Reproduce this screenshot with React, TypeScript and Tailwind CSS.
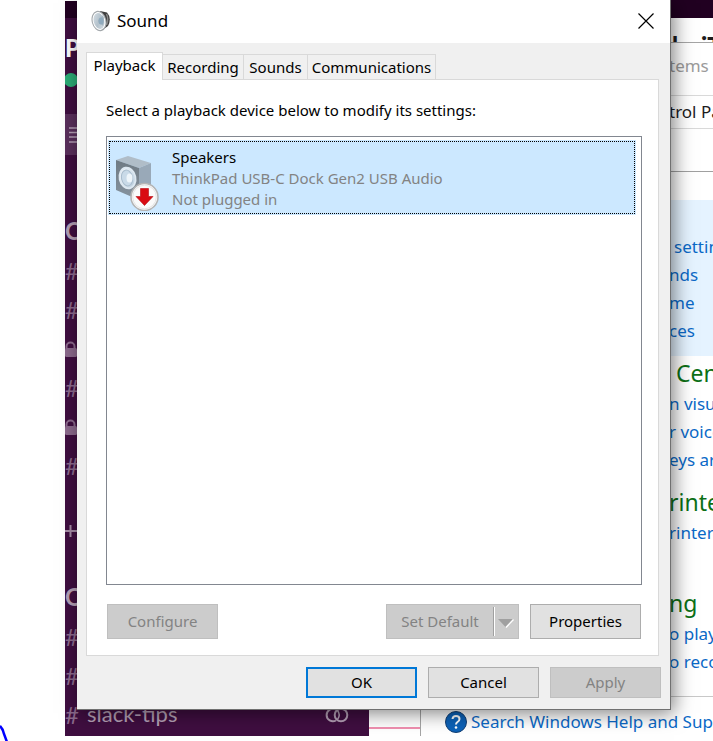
import type { ReactNode } from "react";

const ui = "font-['Noto_Sans','Open_Sans',sans-serif]";

function SpeakerIcon() {
  return (
    <svg width="20" height="22" viewBox="0 0 20 22" className="shrink-0" aria-hidden="true">
      <defs>
        <linearGradient id="cone" x1="0" y1="0" x2="1" y2="1">
          <stop offset="0" stopColor="#dfe6eb" />
          <stop offset="0.5" stopColor="#b4c2cc" />
          <stop offset="1" stopColor="#e4eaee" />
        </linearGradient>
      </defs>
      <path d="M9 1 L16 2.500 Q21 8 17 16 L10 21 Z" fill="#3f3f3f" />
      <path d="M15.500 4 Q18 9 15.500 15" fill="none" stroke="#8a8a8a" strokeWidth="1.500" />
      <ellipse cx="8" cy="11" rx="6.500" ry="9.500" transform="rotate(-14 8 11)" fill="url(#cone)" stroke="#a3a8ac" strokeWidth="1.600" />
      <ellipse cx="8" cy="11" rx="5.800" ry="8.600" transform="rotate(-14 8 11)" fill="none" stroke="#ffffff" strokeWidth="1" />
      <path d="M7 11 L12 5 Q14 10 12 16 Z" fill="#a3b4c0" />
      <ellipse cx="10" cy="11" rx="2.500" ry="3.500" fill="#8faabd" />
    </svg>
  );
}

function DeviceIcon() {
  return (
    <svg width="46" height="60" viewBox="0 0 46 60" className="shrink-0" aria-hidden="true">
      <defs>
        <linearGradient id="front" x1="0" y1="0" x2="0" y2="1">
          <stop offset="0" stopColor="#6f7a83" />
          <stop offset="1" stopColor="#8794a0" />
        </linearGradient>
        <linearGradient id="disc" x1="0" y1="0" x2="1" y2="1">
          <stop offset="0" stopColor="#ffffff" />
          <stop offset="1" stopColor="#b3c9db" />
        </linearGradient>
      </defs>
      <path d="M2 9 L14 5 L37 12 L25 17 Z" fill="#b0bdc8" />
      <path d="M25 17 L37 12 V41 L25 49 Z" fill="#99a9b8" />
      <path d="M2 9 L25 17 V49 L2 39 Z" fill="url(#front)" />
      <ellipse cx="13.500" cy="27" rx="8" ry="10.500" transform="rotate(-12 13.500 27)" fill="url(#disc)" stroke="#dde8f1" strokeWidth="1.800" />
      <ellipse cx="13" cy="27" rx="5.500" ry="8" transform="rotate(-12 13 27)" fill="#c9dae8" stroke="#a8bccd" strokeWidth="1" />
      <ellipse cx="15.500" cy="27" rx="3" ry="4.500" fill="#eef5fa" />
      <circle cx="30.500" cy="46" r="13.500" fill="#fafafa" stroke="#b4b4b4" strokeWidth="1.600" />
      <circle cx="30.500" cy="46" r="11.800" fill="none" stroke="#e4e4e4" strokeWidth="1" />
      <path d="M26.500 37.500 H34.500 V45.500 H39 L30.500 54.500 L22 45.500 H26.500 Z" fill="#d90b12" stroke="#b30a10" strokeWidth="0.600" />
    </svg>
  );
}

function LockIcon() {
  return (
    <svg width="12" height="16" viewBox="0 0 12 16" aria-hidden="true">
      <path d="M1.500 8 V5.500 a4 4 0 0 1 8 0 V8" fill="none" stroke="#8c6a8d" strokeWidth="2" />
      <rect x="0" y="7" width="12" height="9" rx="1.500" fill="#8c6a8d" />
    </svg>
  );
}

function Hash({ children }: { children?: ReactNode }) {
  return (
    <li className="flex h-[39px] items-center text-xl text-[#8c6a8d]">
      <span className="w-[22px] text-2xl">#</span>
      {children}
    </li>
  );
}

function Lock() {
  return (
    <li className="flex h-[39px] items-center">
      <LockIcon />
    </li>
  );
}

function Sidebar() {
  return (
    <nav className="absolute left-[65px] top-0 h-[736px] w-[304px] overflow-hidden bg-[#3f0e40] font-['Lato',sans-serif] text-[#b5a0b6]">
      <div className="h-[18px] border-t border-white bg-[#210021]" />
      <div className="mt-3 flex h-9 items-center text-2xl font-black text-white">P</div>
      <div className="flex h-7 items-center">
        <span className="-ml-px size-[14px] rounded-full bg-[#2bac76]" />
      </div>
      <div className="mt-5 flex h-[41px] items-center bg-[#5a2f5c] pl-1">
        <svg width="18" height="16" viewBox="0 0 18 16" aria-hidden="true">
          <path d="M0 1 H18 M0 5.500 H18 M0 10 H18 M0 15 H18" stroke="#b5a0b6" strokeWidth="1.500" />
        </svg>
      </div>
      <div className="mt-[55px] flex h-[41px] items-center text-2xl font-bold">C</div>
      <ul>
        <Hash />
        <Hash />
        <Lock />
        <Hash />
        <Lock />
        <Hash />
      </ul>
      <div className="mt-[26px] flex h-[39px] items-center text-[#a58ba6]">
        <svg width="12" height="14" viewBox="0 0 12 14" aria-hidden="true">
          <path d="M0 7 H12 M5.500 1 V13" stroke="currentColor" strokeWidth="2" />
        </svg>
      </div>
      <div className="mt-[26px] flex h-[41px] items-center text-2xl font-bold">O</div>
      <ul>
        <Hash />
        <Hash />
        <Hash>
          <span className="flex-1 text-[22px] text-[#b5a0b6]">slack-tips</span>
          <svg width="24" height="16" viewBox="0 0 24 16" className="mr-5" fill="none" stroke="#b5a0b6" strokeWidth="2" aria-hidden="true">
            <path d="M11 2.500 A6.300 6.300 0 1 0 11 13.500" />
            <circle cx="16" cy="8" r="6.300" />
            <path d="M12.500 3.500 Q16 8 12.500 12.500" strokeWidth="1.500" />
          </svg>
        </Hash>
      </ul>
    </nav>
  );
}

function PanelLink({ children, inset = "" }: { children: ReactNode; inset?: string }) {
  return (
    <a href="#" className={`block h-7 text-[17px] leading-7 text-[#0b69c7] ${inset}`}>
      {children}
    </a>
  );
}

function PanelHeading({ children, inset = "" }: { children: ReactNode; inset?: string }) {
  return <h2 className={`h-[33px] text-[23px] leading-8 text-[#0c7016] ${inset}`}>{children}</h2>;
}

function ControlPanel() {
  return (
    <section
      className={`absolute left-[420px] right-0 top-[42px] h-[694px] overflow-hidden whitespace-nowrap border-l border-t border-[#a5a5a5] bg-white ${ui}`}
    >
      <div className="h-[52px] pl-[248px] text-[17px] leading-[46px] text-[#9b9b9b]">tems</div>
      <div className="h-[34px] border-y border-[#d9d9d9] pl-[248px] text-[17px] leading-8 text-[#1c1c1c]">trol Panel</div>
      <div className="h-[43px] border-b border-[#a0a0a0]" />
      <div className="mt-7 h-[156px] bg-[#e5f3ff] pl-[248px] pt-[33px]">
        <PanelLink inset="pl-[5px]">settings</PanelLink>
        <PanelLink>nds</PanelLink>
        <PanelLink>me</PanelLink>
        <PanelLink>ces</PanelLink>
      </div>
      <div className="h-[341px] border-b border-[#c8c8c8] pl-[248px] pt-px">
        <PanelHeading inset="pl-[7px]">Center</PanelHeading>
        <PanelLink>n visual</PanelLink>
        <PanelLink>r voice</PanelLink>
        <PanelLink>eys are</PanelLink>
        <div className="mt-3">
          <PanelHeading>rinters</PanelHeading>
          <PanelLink>rinters</PanelLink>
        </div>
        <div className="mt-10">
          <PanelHeading>ng</PanelHeading>
          <PanelLink>o play</PanelLink>
          <PanelLink>o record</PanelLink>
        </div>
      </div>
      <div className="flex h-[50px] items-center gap-1 pl-6">
        <svg width="22" height="22" viewBox="0 0 22 22" className="shrink-0" aria-hidden="true">
          <circle cx="11" cy="11" r="10.500" fill="#0c62b8" stroke="#123f73" />
          <path d="M7.500 8 Q7.800 5 11 5 Q14.500 5 14.500 8 Q14.500 9.800 12.500 11 Q11 12 11 13.500" fill="none" stroke="#fff" strokeWidth="2" />
          <circle cx="11" cy="16.500" r="1.300" fill="#fff" />
        </svg>
        <PanelLink>Search Windows Help and Support</PanelLink>
      </div>
    </section>
  );
}

const button = "w-[111px] border text-[15px]";
const enabled = "border-[#adadad] bg-[#e1e1e1] text-black";
const disabled = "border-[#bfbfbf] bg-[#cccccc] text-[#838383]";
const tab = "h-[25px] border border-b-0 border-[#d9d9d9] bg-[#f0f0f0] leading-6";

function SoundDialog() {
  return (
    <section
      role="dialog"
      aria-label="Sound"
      className={`absolute left-[77px] right-[42px] top-0 border-b border-r border-[#707070] bg-[#f0f0f0] text-[15px] text-black shadow-[3px_3px_18px_rgba(0,0,0,0.5)] ${ui}`}
    >
      <header className="flex h-[43px] items-center bg-white pb-[2px] pl-[14px] pr-4">
        <SpeakerIcon />
        <h1 className="ml-[6px] flex-1 text-[17px]">Sound</h1>
        <button aria-label="Close">
          <svg width="16" height="16" viewBox="0 0 16 16" aria-hidden="true">
            <path d="M0.500 0.500 L15.500 15.500 M15.500 0.500 L0.500 15.500" stroke="#000" strokeWidth="1.200" />
          </svg>
        </button>
      </header>
      <div className="pb-[11px] pl-[9px] pr-[11px] pt-[9px]">
        <div role="tablist" className="flex items-end">
          <button role="tab" aria-selected="true" className="-mb-px h-[28px] w-[77px] border border-b-0 border-[#d9d9d9] bg-white pb-[2px]">
            Playback
          </button>
          <button role="tab" className={`${tab} w-[81px] border-l-0`}>Recording</button>
          <button role="tab" className={`${tab} w-[64px] border-l-0`}>Sounds</button>
          <button role="tab" className={`${tab} w-[128px] border-l-0`}>Communications</button>
        </div>
        <div className="border border-[#d9d9d9] bg-white pb-4 pl-[19px] pr-4 pt-[19px]">
          <p className="h-[22px] leading-[22px]">Select a playback device below to modify its settings:</p>
          <ul className="mt-[15px] h-[449px] border border-[#828790] pl-px pr-[5px] pt-[3px]">
            <li className="h-[75px] bg-[#cce8ff] p-px">
              <div className="flex h-full border border-dotted border-black pl-1">
                <div className="pt-[9px]">
                  <DeviceIcon />
                </div>
                <div className="pl-3 pt-[5px] leading-[21px] text-[#838383]">
                  <p className="text-black">Speakers</p>
                  <p>ThinkPad USB-C Dock Gen2 USB Audio</p>
                  <p>Not plugged in</p>
                </div>
              </div>
            </li>
          </ul>
          <div className="mt-[19px] flex h-[35px] px-px">
            <button disabled className={`${button} ${disabled}`}>Configure</button>
            <div className="flex-1" />
            <button disabled className={`flex w-[133px] items-center border ${disabled}`}>
              <span className="flex-1">Set Default</span>
              <svg width="25" height="31" viewBox="0 0 25 31" aria-hidden="true">
                <path d="M0.500 1 V30" stroke="#a0a0a0" />
                <path d="M1.500 1 V30" stroke="#fff" />
                <path d="M5 13 H20 L12.500 21 Z" fill="#a0a0a0" />
                <path d="M13 21.500 L20.500 13.500" stroke="#fff" strokeWidth="1.300" />
              </svg>
            </button>
            <button className={`ml-[11px] ${button} ${enabled}`}>Properties</button>
          </div>
        </div>
        <div className="-mr-[2px] mt-[11px] flex h-[31px] justify-end gap-[11px]">
          <button className="w-[111px] border-2 border-[#0078d7] bg-[#e1e1e1]">OK</button>
          <button className={`${button} ${enabled}`}>Cancel</button>
          <button disabled className={`${button} ${disabled}`}>Apply</button>
        </div>
      </div>
    </section>
  );
}

export default function App() {
  return (
    <main className="relative h-screen min-h-[741px] overflow-hidden bg-white">
      <div className="absolute left-[369px] right-0 top-0 h-[736px] overflow-hidden font-['Lato',sans-serif]">
        <div className="h-[18px] bg-[#210021]" />
        <p className="flex h-6 gap-4 overflow-hidden pl-[303px] pt-3 text-2xl font-black text-[#1d1c1d]">
          <span>k</span>
          <span>iT</span>
        </p>
        <div className="mt-[685px] h-0.5 bg-[#f08fb0]" />
      </div>
      <Sidebar />
      <ControlPanel />
      <SoundDialog />
      <svg className="absolute left-0 top-[725px]" width="10" height="16" viewBox="0 0 10 16" aria-hidden="true">
        <path d="M0 1 Q3 4 4 9 L7 17" fill="none" stroke="#0000ff" strokeWidth="2.500" />
      </svg>
    </main>
  );
}
